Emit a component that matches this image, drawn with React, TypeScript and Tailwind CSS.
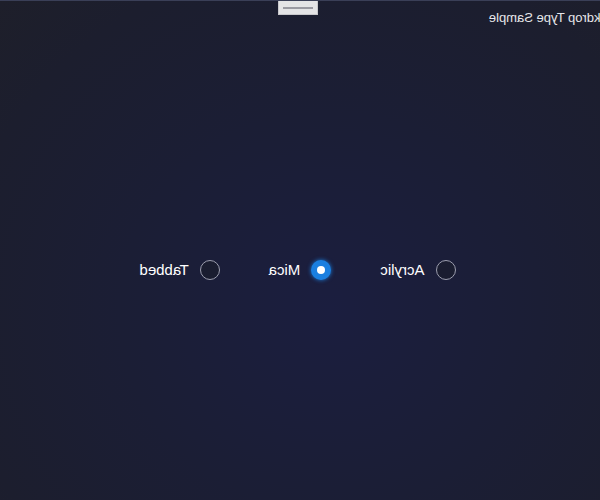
import React from "react";

const items = [
  { label: "Acrylic", selected: false },
  { label: "Mica", selected: true },
  { label: "Tabbed", selected: false },
];

export default function App() {
  return (
    <div
      className="relative w-[600px] h-[500px] overflow-hidden border-t border-[#3a3f57] bg-[radial-gradient(ellipse_at_55%_62%,#1b1e3f_0%,#1b1e35_45%,#1c1e2e_80%,#1e1f2a_100%)]"
      style={{ fontFamily: '"Liberation Sans", Arial, sans-serif' }}
    >
      <div className="-scale-x-100 flex flex-col w-full h-full text-white">
        <div className="h-[36px] pt-[9px] -ml-[23px] text-[13px] leading-[16px] text-[#e6e6ea] whitespace-nowrap">
          Backdrop Type Sample
        </div>
        <div className="mt-[223px] flex flex-row justify-center items-center h-[20px] pl-[5px]">
          <div className="flex flex-row items-center gap-[49px]">
            {items.map((it) => (
              <div key={it.label} className="flex flex-row items-center gap-[11px]">
                {it.selected ? (
                  <span className="w-[20px] h-[20px] rounded-full bg-[#1a7fe0] flex items-center justify-center shadow-[0_0_4px_#1a7fe0]">
                    <span className="w-[8px] h-[8px] rounded-full bg-white" />
                  </span>
                ) : (
                  <span className="w-[20px] h-[20px] rounded-full border border-[#9c9eae] bg-[#1a1d30]" />
                )}
                <span className="text-[15px] leading-[20px] text-white">{it.label}</span>
              </div>
            ))}
          </div>
        </div>
      </div>
      <div className="absolute left-[278px] -top-px w-[40px] h-[15px] bg-[#e4e4e6] border border-[#c8c8cc] flex items-center justify-center">
        <div className="w-[30px] h-[2px] bg-[#9a9aa2]" />
      </div>
    </div>
  );
}
